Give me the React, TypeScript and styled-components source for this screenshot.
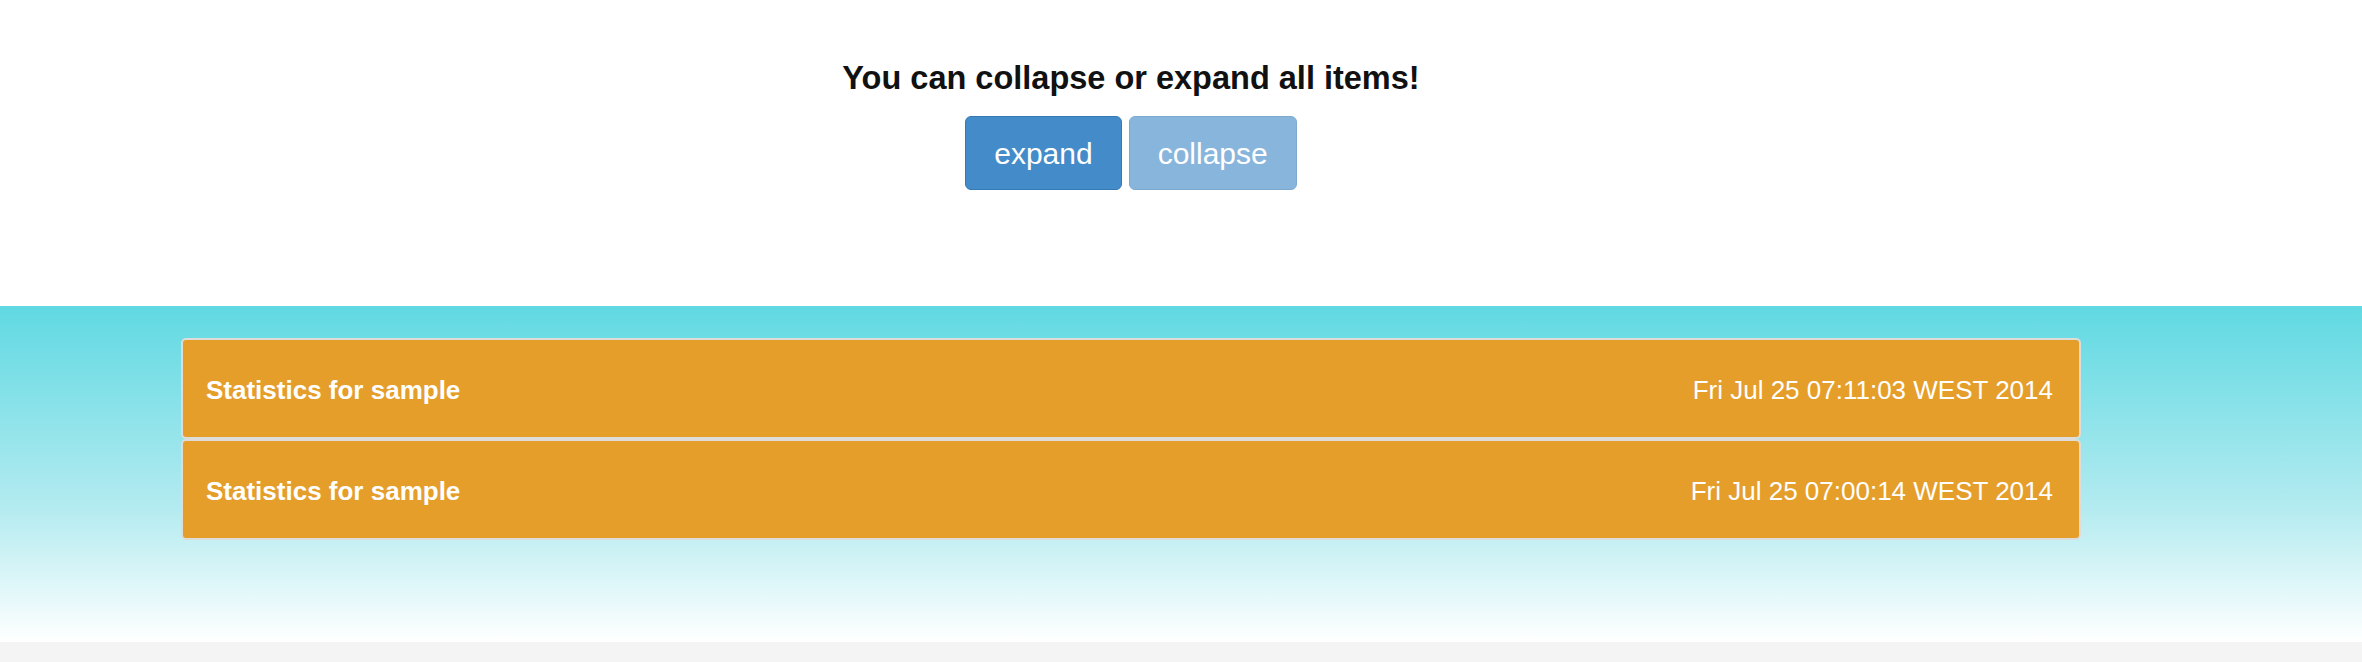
import React from "react";
import styled, { createGlobalStyle } from "styled-components";

const Global = createGlobalStyle`
  html, body { margin: 0; padding: 0; background: #ffffff; }
  body { font-family: "Liberation Sans", Arial, Helvetica, sans-serif; }
`;

const Page = styled.div`
  display: flex;
  flex-direction: column;
  width: 2362px;
  height: 662px;
  overflow: hidden;
`;

const Top = styled.section`
  height: 306px;
  background: #ffffff;
  display: flex;
  flex-direction: column;
  box-sizing: border-box;
`;

const Column = styled.div`
  width: 1900px;
  margin-left: 181px;
  display: flex;
  flex-direction: column;
  align-items: center;
`;

const Heading = styled.h3`
  margin: 60px 0 0;
  font-size: 32.5px;
  line-height: 36px;
  font-weight: 700;
  color: #111;
  text-align: center;
`;

const ButtonRow = styled.div`
  display: flex;
  gap: 7px;
  margin-top: 20px;
`;

const Button = styled.button<{ $disabled?: boolean }>`
  box-sizing: border-box;
  height: 74px;
  padding: 2px 28px 0;
  font-family: "Liberation Sans", Arial, Helvetica, sans-serif;
  font-size: 30px;
  color: #ffffff;
  background: #438bc9;
  border: 1px solid #3579b5;
  border-radius: 6px;
  opacity: ${(p) => (p.$disabled ? 0.63 : 1)};
  cursor: ${(p) => (p.$disabled ? "not-allowed" : "pointer")};
`;

const Band = styled.section`
  height: 336px;
  background: linear-gradient(to bottom, #60d9e2 0%, #b3ebf0 60%, #ffffff 100%);
  padding-top: 32px;
  box-sizing: border-box;
`;

const PanelList = styled.div`
  width: 1900px;
  margin-left: 181px;
  display: flex;
  flex-direction: column;
`;

const Panel = styled.div`
  box-sizing: border-box;
  height: 101px;
  background: #e59e2a;
  border: 2px solid #dddcd9;
  border-radius: 5px;
  display: flex;
  align-items: center;
  justify-content: space-between;
  padding: 4px 26px 0 23px;
  color: #ffffff;
  font-size: 26px;
`;

const Title = styled.span`
  font-weight: 700;
`;

const DateText = styled.span`
  font-weight: 400;
`;

const Footer = styled.footer`
  height: 20px;
  background: #f4f4f4;
`;

const items = [
  { title: "Statistics for sample", date: "Fri Jul 25 07:11:03 WEST 2014" },
  { title: "Statistics for sample", date: "Fri Jul 25 07:00:14 WEST 2014" },
];

export default function App() {
  return (
    <Page>
      <Global />
      <Top>
        <Column>
          <Heading>You can collapse or expand all items!</Heading>
          <ButtonRow>
            <Button>expand</Button>
            <Button $disabled>collapse</Button>
          </ButtonRow>
        </Column>
      </Top>
      <Band>
        <PanelList>
          {items.map((it, i) => (
            <Panel key={i}>
              <Title>{it.title}</Title>
              <DateText>{it.date}</DateText>
            </Panel>
          ))}
        </PanelList>
      </Band>
      <Footer />
    </Page>
  );
}
